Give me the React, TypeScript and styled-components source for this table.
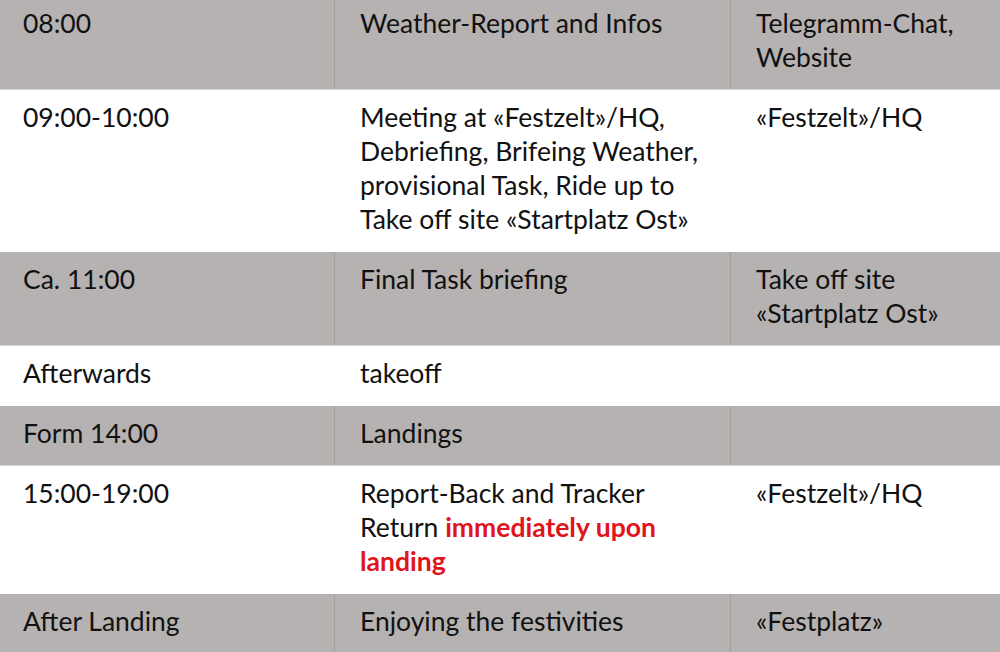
import React from "react";
import styled, { createGlobalStyle } from "styled-components";

const Global = createGlobalStyle`
  html, body { margin: 0; padding: 0; background: #ffffff; }
  body { font-family: Lato, "Open Sans", sans-serif; }
`;

const Table = styled.div`
  width: 1000px;
  display: flex;
  flex-direction: column;
  color: #111111;
  font-family: Lato, "Open Sans", sans-serif;
  font-size: 26.5px;
  line-height: 34px;
`;

const Row = styled.div<{ $shaded: boolean }>`
  display: grid;
  grid-template-columns: 334px 396px 270px;
  background: ${(p) => (p.$shaded ? "#b6b2b1" : "#ffffff")};
  border-bottom: 1px solid ${(p) => (p.$shaded ? "#d6d3d2" : "#ffffff")};
`;

const Cell = styled.div<{ $shaded: boolean; $divider?: boolean; $first?: boolean }>`
  padding: ${(p) => (p.$first ? "6px" : "10px")} 16px 15px 25px;
  border-left: 1px solid
    ${(p) => (p.$divider ? (p.$shaded ? "#a29e9c" : "#ffffff") : "transparent")};
  &:first-child {
    padding-left: 23px;
    border-left: none;
  }
`;

const Alert = styled.span`
  color: #e0141b;
  font-weight: 700;
`;

type RowData = { time: React.ReactNode; what: React.ReactNode; where: React.ReactNode };

const rows: RowData[] = [
  { time: "08:00", what: "Weather-Report and Infos", where: <>Telegramm-Chat,<br />Website</> },
  {
    time: "09:00-10:00",
    what: (
      <>
        Meeting at «Festzelt»/HQ,<br />Debriefing, Brifeing Weather,<br />provisional Task, Ride up to<br />Take off site «Startplatz Ost»
      </>
    ),
    where: "«Festzelt»/HQ",
  },
  { time: "Ca. 11:00", what: "Final Task briefing", where: <>Take off site<br />«Startplatz Ost»</> },
  { time: "Afterwards", what: "takeoff", where: "" },
  { time: "Form 14:00", what: "Landings", where: "" },
  {
    time: "15:00-19:00",
    what: (
      <>
        Report-Back and Tracker<br />Return <Alert>immediately upon</Alert>
        <br />
        <Alert>landing</Alert>
      </>
    ),
    where: "«Festzelt»/HQ",
  },
  { time: "After Landing", what: "Enjoying the festivities", where: "«Festplatz»" },
];

export default function App() {
  return (
    <>
      <Global />
      <Table>
        {rows.map((r, i) => {
          const shaded = i % 2 === 0;
          const first = i === 0;
          return (
            <Row key={i} $shaded={shaded}>
              <Cell $shaded={shaded} $first={first}>{r.time}</Cell>
              <Cell $shaded={shaded} $first={first} $divider>{r.what}</Cell>
              <Cell $shaded={shaded} $first={first} $divider>{r.where}</Cell>
            </Row>
          );
        })}
      </Table>
    </>
  );
}
